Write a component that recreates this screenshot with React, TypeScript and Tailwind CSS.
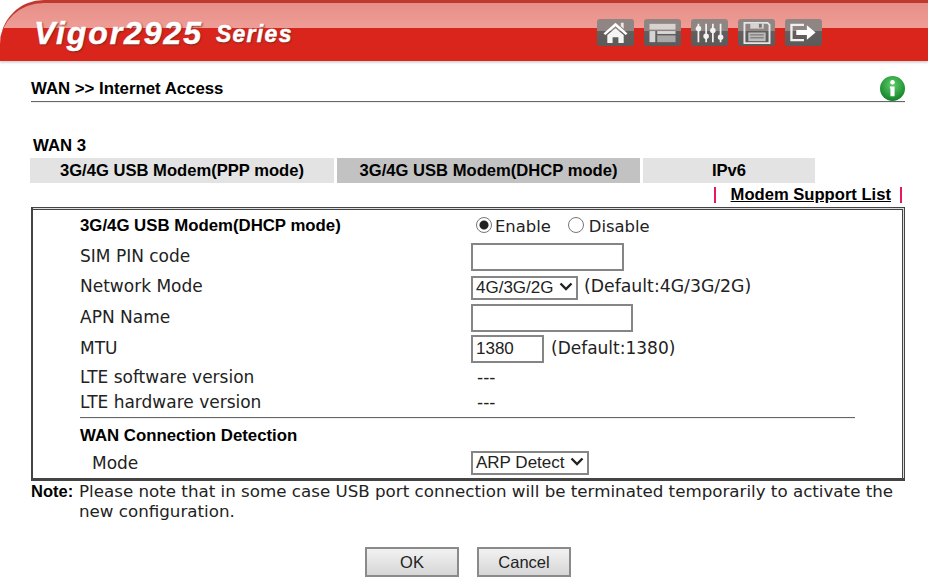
const bold = "[font-family:'Liberation_Sans',Arial,sans-serif] font-bold text-black";
const verdana = "[font-family:'DejaVu_Sans',Verdana,sans-serif] text-[17px] text-[#222]";

function ToolButton({ children }: { children: React.ReactNode }) {
  return (
    <div className="flex h-[27px] w-[37px] items-center justify-center rounded-[3px] bg-[linear-gradient(#8f8582_0,#8f8582_45%,#625f5e_45%,#5d5b5a_100%)]">
      <svg viewBox="0 0 37 28" className="h-[27px] w-[37px]">
        {children}
      </svg>
    </div>
  );
}

function Row({ label, strong, className, children }: { label: string; strong?: boolean; className: string; children?: React.ReactNode }) {
  return (
    <div className={`flex items-center pl-[47px] ${className}`}>
      <div className={`w-[391px] shrink-0 ${strong ? `${bold} text-[16.8px]` : verdana}`}>{label}</div>
      <div className={`flex items-center ${verdana}`}>{children}</div>
    </div>
  );
}

function Tab({ label, className }: { label: string; className: string }) {
  return <div className={`flex h-[25px] items-center justify-center pt-px text-[16.6px] ${bold} ${className}`}>{label}</div>;
}

function Select({ value, className }: { value: string; className: string }) {
  return (
    <div className={`relative h-[24px] ${className}`}>
      <select className="h-full w-full appearance-none border-2 border-[#858585] bg-white pl-[3px] leading-[20px] [font-family:'Liberation_Sans',Arial,sans-serif] text-[17px] text-[#222]">
        <option>{value}</option>
      </select>
      <svg viewBox="0 0 14 9" className="pointer-events-none absolute right-[5px] top-[7px] h-[9px] w-[14px]">
        <path d="M1.500 1.500 7 7l5.500-5.500" fill="none" stroke="#222" strokeWidth="2.400" />
      </svg>
    </div>
  );
}

const inputClass = "h-[28px] border-2 border-[#858585] bg-white";
const radioClass = "m-0 h-[16px] w-[16px] appearance-none rounded-full border border-[#777] bg-white";
const buttonClass = "h-[30px] w-[94px] border-2 border-[#8a8a8a] bg-[linear-gradient(#f2f2f2,#d6d6d6)] [font-family:'Liberation_Sans',Arial,sans-serif] text-[16.500px] text-[#222]";

export default function App() {
  return (
    <div className="h-[577px] w-[928px] overflow-hidden bg-white">
      <header className="flex h-[61px] items-start rounded-tl-[44px] border-t-[3px] border-[#c0392f] bg-[linear-gradient(#e78f88_0,#ee9d96_43%,#da251c_43%,#da251c_100%)] pl-[34px] shadow-[0_2px_2px_#d8d8d8]">
        <div className="mt-[6px] w-[563px] [font-family:'Liberation_Sans',Arial,sans-serif] font-bold italic text-white [-webkit-text-stroke:0.5px_white] [text-shadow:1px_1px_2px_#6b2a22]">
          <span className="text-[32px] tracking-[1.900px]">Vigor2925</span>
          <span className="ml-[13px] align-[2px] text-[23px] tracking-[1.300px]">Series</span>
        </div>
        <div className="mt-[16px] flex gap-[10px]">
          <ToolButton>
            <path d="M6 15 18.500 4 31 15l-2 1.500L18.500 7.500 8 16.500Z" fill="#fff" />
            <path d="M24 4h3v6l-3-2.500Z" fill="#e8e8e8" />
            <path d="M10 16.500 18.500 9.500 27 16.500V25h-5.500v-6h-6v6H10Z" fill="#f4f4f4" />
          </ToolButton>
          <ToolButton>
            <path d="M5 5h27v6H5Z" fill="#d8d2d0" />
            <path d="M5 12.500h6V24H5Z" fill="#d4d4d4" />
            <path d="M13 12.500h19v3H13Z" fill="#d8d8d8" />
            <path d="M13 17h19v7H13Z" fill="#a8a8a8" />
          </ToolButton>
          <ToolButton>
            <g stroke="#f2f2f2" strokeWidth="1.800" fill="#f2f2f2">
              <path d="M7 5v19M15 5v19M22 5v19M30 5v19" fill="none" />
              <circle cx="7" cy="10" r="2" />
              <circle cx="15" cy="18" r="2" />
              <circle cx="22" cy="12" r="2" />
              <circle cx="30" cy="19" r="2" />
            </g>
          </ToolButton>
          <ToolButton>
            <path d="M6 4h24l2 2v19H6Z" fill="none" stroke="#e6e6e6" strokeWidth="2" />
            <path d="M12 4h14v6H12Z" fill="#d8d2d0" />
            <path d="M21 5h3v4h-3Z" fill="#777" />
            <path d="M10 14h18v9H10Z" fill="#bcbcbc" />
            <path d="M12 16.500h14M12 19.500h14" stroke="#666" strokeWidth="1" />
          </ToolButton>
          <ToolButton>
            <path d="M19 6H6v16h13" fill="none" stroke="#f0f0f0" strokeWidth="2.400" />
            <path d="M11 11.500h11V6.500l9 7.500-9 7.500v-5H11Z" fill="#fff" />
          </ToolButton>
        </div>
      </header>

      <main className="pl-[31px] pr-[23px]">
        <div className="mt-[15px] flex h-[25px] items-center justify-between">
          <h1 className={`${bold} text-[16.8px]`}>WAN &gt;&gt; Internet Access</h1>
          <svg viewBox="0 0 24 24" className="h-[25px] w-[25px]">
            <defs>
              <radialGradient id="infoGreen" cx="50%" cy="35%" r="70%">
                <stop offset="0" stopColor="#5fd06a" />
                <stop offset="1" stopColor="#0b7a22" />
              </radialGradient>
            </defs>
            <circle cx="12" cy="12" r="12" fill="url(#infoGreen)" />
            <circle cx="12" cy="6" r="2.200" fill="#fff" />
            <path d="M9.500 10h4.500v9.500h-4V12H9.500Z" fill="#fff" />
          </svg>
        </div>
        <div className="h-[2px] border-t border-[#666] bg-[#eee]" />

        <div className={`${bold} ml-[2px] mt-[30px] text-[16.8px]`}>WAN 3</div>
        <div className="-ml-px flex gap-[3px]">
          <Tab label="3G/4G USB Modem(PPP mode)" className="w-[304px] bg-[#e3e3e3]" />
          <Tab label="3G/4G USB Modem(DHCP mode)" className="w-[303px] bg-[#c2c2c2]" />
          <Tab label="IPv6" className="w-[172px] bg-[#e3e3e3]" />
        </div>
        <div className="flex h-[24px] items-center justify-end pr-[3px]">
          <span className="h-[16px] w-[2px] bg-[#e8185f]" />
          <a className={`${bold} ml-[15px] pt-px text-[16.6px] underline`}>Modem Support List</a>
          <span className="ml-[9px] h-[16px] w-[2px] bg-[#e8185f]" />
        </div>

        <section className="h-[274px] border-t border-r border-b-[3px] border-l-[2px] border-[#444] bg-[#ddd] pt-px pr-px">
          <div className="h-full border-t border-r border-[#444] bg-white">
            <Row label="3G/4G USB Modem(DHCP mode)" strong className="h-[31px]">
              <input type="radio" name="mode" defaultChecked className={`${radioClass} mb-[2px] ml-[5px] bg-[radial-gradient(circle,#222_0,#222_4px,#fff_5px)]`} />
              <span className="ml-[3px] mt-[3px] text-[16.4px]">Enable</span>
              <input type="radio" name="mode" className={`${radioClass} mb-[2px] ml-[17px]`} />
              <span className="ml-[5px] mt-[3px] text-[16.4px]">Disable</span>
            </Row>
            <Row label="SIM PIN code" className="h-[31px]">
              <input className={`${inputClass} w-[153px]`} />
            </Row>
            <Row label="Network Mode" className="h-[30px]">
              <Select value="4G/3G/2G" className="w-[107px]" />
              <span className="ml-[6px] text-[17.3px]">(Default:4G/3G/2G)</span>
            </Row>
            <Row label="APN Name" className="h-[31px]">
              <input className={`${inputClass} w-[162px]`} />
            </Row>
            <Row label="MTU" className="h-[31px]">
              <input defaultValue="1380" className={`${inputClass} h-[26px] w-[73px] px-[3px] [font-family:'Liberation_Sans',Arial,sans-serif] text-[17px]`} />
              <span className="ml-[7px]">(Default:1380)</span>
            </Row>
            <Row label="LTE software version" className="h-[27px]">
              <span className="ml-[6px]">---</span>
            </Row>
            <Row label="LTE hardware version" className="h-[23px]">
              <span className="ml-[6px]">---</span>
            </Row>
            <div className="ml-[47px] mr-[47px] mt-[3px] h-[2px] border-t border-[#666] bg-[#eee]" />
            <Row label="WAN Connection Detection" strong className="h-[32px]" />
            <div className="flex h-[22px] items-center pl-[47px]">
              <div className={`w-[391px] shrink-0 pl-[12px] pt-[4px] text-[16.5px] ${verdana}`}>Mode</div>
              <Select value="ARP Detect" className="w-[118px]" />
            </div>
          </div>
        </section>

        <div className="flex leading-[20px]">
          <span className={`${bold} w-[48px] shrink-0 text-[16.500px]`}>Note:</span>
          <p className="[font-family:'DejaVu_Sans',Verdana,sans-serif] text-[16.7px] leading-[20px] text-[#222]">
            Please note that in some case USB port connection will be terminated temporarily to activate the new configuration.
          </p>
        </div>

        <div className="mt-[26px] flex justify-center gap-[18px]">
          <button className={buttonClass}>OK</button>
          <button className={buttonClass}>Cancel</button>
        </div>
      </main>
    </div>
  );
}
